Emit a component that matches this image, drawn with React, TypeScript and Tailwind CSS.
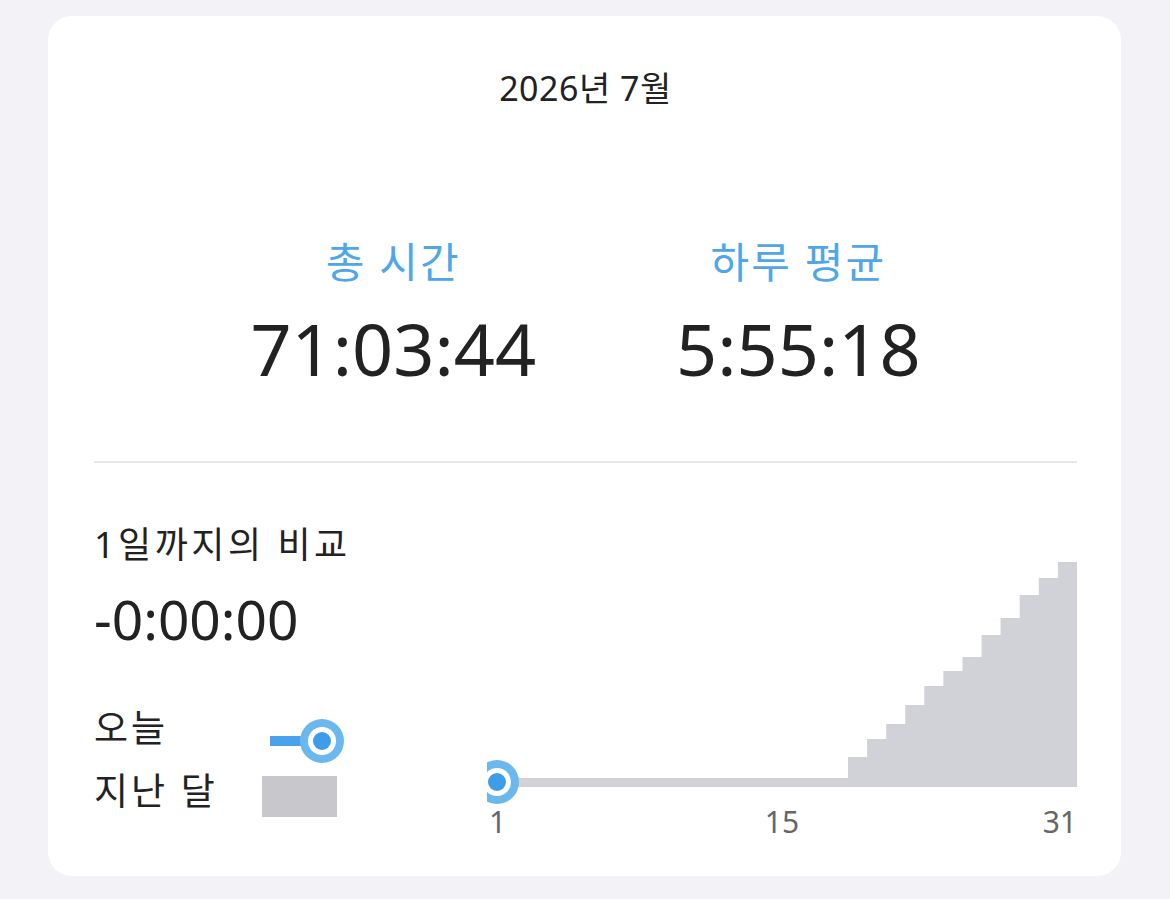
import React from "react";

const stepTops = [217, 199, 184, 165, 146, 131, 117, 95, 78, 55, 38, 22];
const stepStart = 361;
const stepW = 19.08;

function StepChart() {
    const pts: string[] = ["10,238", `${stepStart},238`];
    stepTops.forEach((top, i) => {
        const x0 = stepStart + i * stepW;
        const x1 = stepStart + (i + 1) * stepW;
        pts.push(`${x0.toFixed(1)},${top}`);
        pts.push(`${x1.toFixed(1)},${top}`);
    });
    pts.push("590,247", "10,247");

    return (
        <svg width="590" height="266" viewBox="0 0 590 266" className="block overflow-hidden">
            <polygon points={pts.join(" ")} fill="#d1d1d8" />
            <circle cx="10" cy="242" r="22" fill="#6bb8ef" />
            <circle cx="10" cy="242" r="14" fill="#ffffff" />
            <circle cx="10" cy="242" r="9" fill="#3f9ceb" />
        </svg>
    );
}

function TodayIcon() {
    return (
        <svg width="84" height="46" viewBox="0 0 84 46" className="block">
            <rect x="8" y="18" width="40" height="10" fill="#4aa3ea" />
            <circle cx="60" cy="23" r="22" fill="#6bb8ef" />
            <circle cx="60" cy="23" r="14" fill="#ffffff" />
            <circle cx="60" cy="23" r="9" fill="#3f9ceb" />
        </svg>
    );
}

export default function App() {
    return (
        <div className="min-h-[899px] bg-[#f2f2f7] pt-4 pl-12 font-['Noto_Sans','Noto_Sans_CJK_KR',sans-serif] text-[#222222]">
            <div className="w-[1073px] h-[860px] bg-white rounded-[24px] pl-[46px] pr-[44px]">
                {/* Month title */}
                <div className="pt-[55px] text-center text-[34px] leading-[34px] tracking-[0.5px]">2026년 7월</div>

                {/* Totals */}
                <div className="flex justify-center gap-[140px] mt-[136px]">
                    <div className="flex flex-col items-center">
                        <div className="text-[42px] leading-[42px] tracking-[2px] text-[#4fa6e8]">총 시간</div>
                        <div className="mt-[29px] text-[72px] leading-[72px]">71:03:44</div>
                    </div>
                    <div className="flex flex-col items-center">
                        <div className="text-[42px] leading-[42px] tracking-[2px] text-[#4fa6e8]">하루 평균</div>
                        <div className="mt-[29px] text-[72px] leading-[72px]">5:55:18</div>
                    </div>
                </div>

                <div className="mt-[77px] h-[2px] bg-[#e8e8eb]" />

                {/* Comparison */}
                <div className="flex mt-[62px]">
                    <div className="w-[393px] flex flex-col pt-[2px]">
                        <div className="text-[36px] leading-[36px] tracking-[3.5px]">1일까지의 비교</div>
                        <div className="mt-[28px] text-[55px] leading-[55px]">-0:00:00</div>

                        <div className="mt-[63px] flex items-start">
                            <div className="w-[168px] text-[37px] leading-[37px] tracking-[3px]">오늘</div>
                            <div className="mt-[9px]"><TodayIcon /></div>
                        </div>
                        <div className="mt-[8px] flex items-start">
                            <div className="w-[168px] text-[37px] leading-[37px] tracking-[3px]">지난 달</div>
                            <div className="mt-[4px] w-[75px] h-[41px] bg-[#c7c7cc]" />
                        </div>
                    </div>

                    <div className="w-[590px] mt-[15px]">
                        <StepChart />
                        <div className="grid grid-cols-3 mt-[1px] text-[30px] leading-[30px] text-[#666666]">
                            <div className="text-left pl-[2px]">1</div>
                            <div className="text-center">15</div>
                            <div className="text-right">31</div>
                        </div>
                    </div>
                </div>
            </div>
        </div>
    );
}
